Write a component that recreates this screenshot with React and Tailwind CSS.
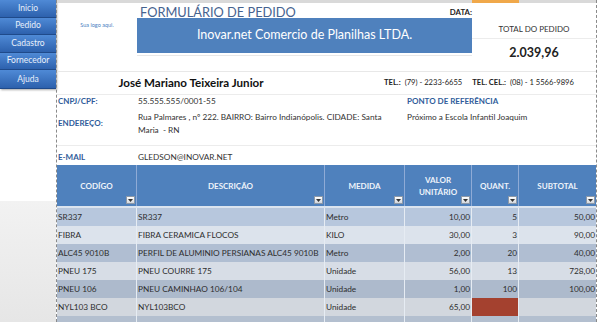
const menu = ['Inicio', 'Pedido', 'Cadastro', 'Fornecedor', 'Ajuda'];

const cols = [
  { w: 'w-[80px]', label: 'CODÍGO' },
  { w: 'w-[188px]', label: 'DESCRIÇÃO' },
  { w: 'w-[80px]', label: 'MEDIDA' },
  { w: 'w-[67px]', label: 'VALOR UNITÁRIO' },
  { w: 'w-[47px]', label: 'QUANT.' },
  { w: 'w-[77px]', label: 'SUBTOTAL' },
];

const items = [
  ['SR337', 'SR337', 'Metro', '10,00', '5', '50,00'],
  ['FIBRA', 'FIBRA CERAMICA FLOCOS', 'KILO', '30,00', '3', '90,00'],
  ['ALC45 9010B', 'PERFIL DE ALUMINIO PERSIANAS ALC45 9010B', 'Metro', '2,00', '20', '40,00'],
  ['PNEU 175', 'PNEU COURRE 175', 'Unidade', '56,00', '13', '728,00'],
  ['PNEU 106', 'PNEU CAMINHAO 106/104', 'Unidade', '1,00', '100', '100,00'],
  ['NYL103 BCO', 'NYL103BCO', 'Unidade', '65,00', '', ''],
  ['', '', '', '', '', ''],
];

const stripes = [
  'bg-[#b7c7dd]',
  'bg-[#dce3ec]',
  'bg-[#b0bed2]',
  'bg-[#d7dde6]',
  'bg-[#adbacc]',
  'bg-[#d2d7de]',
  'bg-[#b3bfcf]',
];

function FilterArrow() {
  return (
    <div className="absolute right-[1px] bottom-[2px] w-[9px] h-[8px] bg-gradient-to-b from-white to-[#d4d8de] border border-[#8d99a8] flex items-center justify-center">
      <svg width="5" height="3" viewBox="0 0 5 3">
        <path d="M0 0h5L2.5 3z" fill="#333" />
      </svg>
    </div>
  );
}

function Label({ children }) {
  return <span className="text-[#2f5c9a] font-bold text-[8px]">{children}</span>;
}

export default function App() {
  return (
    <div className="w-[600px] h-[322px] overflow-hidden bg-white flex font-[Lato,sans-serif] text-[#333]">
      {/* menu lateral */}
      <div className="w-[56px] flex flex-col shrink-0">
        <div className="flex flex-col shrink-0 shadow-[1px_1px_2px_rgba(0,0,0,0.35)]">
          {menu.map((m, i) => (
            <div
              key={m}
              className={
                'flex items-center justify-center text-[8.5px] text-[#e8f0fb] bg-gradient-to-b from-[#4f8ad6] to-[#2d61ad] border-b border-[#1f4a8a] ' +
                (i === 4 ? 'h-[19px]' : 'h-[17.5px]')
              }
            >
              {m}
            </div>
          ))}
        </div>
        <div className="h-[112px] shrink-0" />
        <div className="flex-1 bg-gradient-to-b from-[#f2f2f2] to-[#e6e6e6]" />
      </div>

      {/* planilha */}
      <div className="w-[541px] shrink-0 border-l border-r border-dashed border-[#8a8a8a] flex flex-col">
        <div className="h-[3px] shrink-0 flex bg-[#d9d9d9]">
          <div className="w-[415px]" />
          <div className="w-[47px] bg-[#f0a84a]" />
        </div>

        {/* titulo */}
        <div className="h-[15px] shrink-0 flex items-center">
          <div className="w-[83px]" />
          <div className="w-[332px] flex items-center justify-between">
            <span className="text-[12.8px] text-[#45628f] leading-none mt-[3px]">FORMULÁRIO DE PEDIDO</span>
            <span className="text-[7.8px] font-bold text-[#222] mt-[5px]">DATA:</span>
          </div>
        </div>

        {/* cabecalho */}
        <div className="flex h-[54px] shrink-0 border-b border-[#e8e8e8]">
          <div className="w-[80px] flex justify-center pt-[3px]">
            <span className="text-[5.5px] text-[#4a7fc1]">Sua logo aqui.</span>
          </div>
          <div className="w-[335px] flex flex-col">
            <div className="h-[37px] bg-[#4f81bd] flex items-center justify-center border-b-2 border-white">
              <span className="text-[12.5px] text-white">Inovar.net Comercio de Planilhas LTDA.</span>
            </div>
            <div className="flex-1 border-t border-[#e8e8e8]" />
          </div>
          <div className="w-[124px] flex flex-col items-center">
            <div className="h-[21px] w-full border-b border-[#ececec] flex items-end justify-center pb-[3px]">
              <span className="text-[8px] text-[#333]">TOTAL DO PEDIDO</span>
            </div>
            <span className="text-[12.5px] font-bold text-[#222] mt-[5px]">2.039,96</span>
          </div>
        </div>

        {/* cliente */}
        <div className="flex h-[23px] shrink-0 items-center border-b border-[#ececec]">
          <div className="w-[268px] text-center text-[11.6px] font-bold text-[#111]">José Mariano Teixeira Junior</div>
          <div className="flex-1 flex items-center text-[7.6px] pl-[59px] text-[#222]">
            <span className="font-bold">TEL.:</span>
            <span className="ml-[4px]">(79) - 2233-6655</span>
            <span className="font-bold ml-[10px]">TEL. CEL.:</span>
            <span className="ml-[4px]">(08) - 1 5566-9896</span>
          </div>
        </div>

        <div className="flex h-[13px] shrink-0 items-center text-[8.25px]">
          <div className="w-[80px] pl-[1px]"><Label>CNPJ/CPF:</Label></div>
          <div className="w-[268px] pl-[1px]">55.555.555/0001-55</div>
          <div className="flex-1 pl-[2px]"><Label>PONTO DE REFERÊNCIA</Label></div>
        </div>

        <div className="flex h-[38px] shrink-0 text-[8.25px] border-b border-[#ececec]">
          <div className="w-[80px] pl-[1px] pt-[9px]"><Label>ENDEREÇO:</Label></div>
          <div className="w-[268px] pl-[1px] pr-[2px] pt-[3px] leading-[13px]">
            Rua Palmares , nº 222. BAIRRO: Bairro Indianópolis. CIDADE: Santa Maria&nbsp; - RN
          </div>
          <div className="flex-1 pl-[2px] pt-[3px] leading-[13px]">Próximo a Escola Infantil Joaquim</div>
        </div>

        <div className="flex h-[19px] shrink-0 items-end pb-[2px] text-[8.25px]">
          <div className="w-[80px] pl-[1px]"><Label>E-MAIL</Label></div>
          <div className="flex-1 pl-[1px]">GLEDSON@INOVAR.NET</div>
        </div>

        {/* tabela */}
        <div className="flex h-[43px] shrink-0 bg-[#4f81bd] border-b-2 border-[#dbe4ef]">
          {cols.map((c, i) => (
            <div
              key={c.label}
              className={
                c.w +
                ' relative flex items-center justify-center text-center px-[6px] text-[8px] font-bold text-[#eef3fa] leading-[12px] ' +
                (i < cols.length - 1 ? 'border-r border-[#8fabd6]' : '')
              }
            >
              {c.label}
              <FilterArrow />
            </div>
          ))}
        </div>

        {items.map((row, r) => (
          <div key={r} className={'flex h-[18px] shrink-0 ' + stripes[r]}>
            {row.map((v, i) => (
              <div
                key={i}
                className={
                  cols[i].w +
                  ' flex items-center text-[8.25px] text-[#2e2e2e] whitespace-nowrap ' +
                  (i < 3 ? 'pl-[1px] ' : 'justify-end pr-[1px] ') +
                  (i === 1 ? 'overflow-visible ' : 'overflow-hidden ') +
                  (i < cols.length - 1 ? 'border-r border-[#e6ecf3] ' : '') +
                  (r === 5 && i === 4 ? 'bg-[#a4412f]' : '')
                }
              >
                {v}
              </div>
            ))}
          </div>
        ))}
      </div>
      <div className="flex-1 bg-white" />
    </div>
  );
}
